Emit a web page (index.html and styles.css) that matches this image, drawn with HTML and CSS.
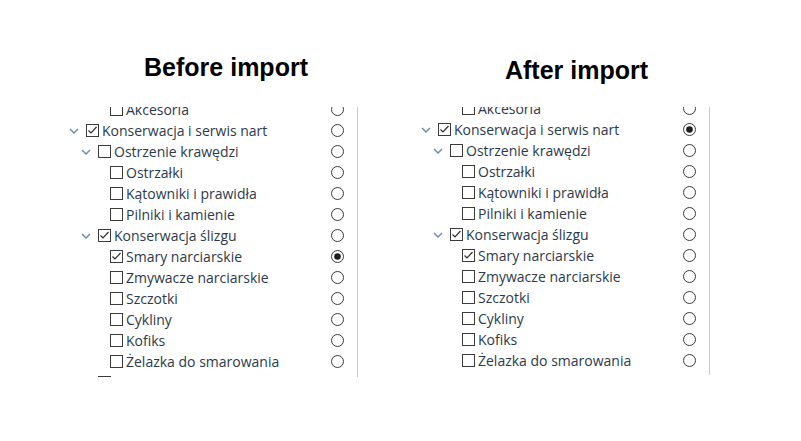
FILE: index.html
```html
<!DOCTYPE html>
<html lang="pl">
<head>
<meta charset="utf-8">
<title>Before / After import</title>
<link rel="stylesheet" href="styles.css">
</head>
<body>
<div class="page">
  <section class="col col-left">
    <h2 class="title">Before import</h2>
    <div class="tree">
      <ul class="list">
        <li class="row l2"><span class="sp"></span><svg class="cb" viewBox="0 0 13 13"><rect x="0.5" y="0.5" width="12" height="12"/></svg><span class="lbl">Akcesoria</span><svg class="rd" viewBox="0 0 13 13"><circle cx="6.5" cy="6.5" r="6"/></svg></li>
        <li class="row l0"><svg class="chev" viewBox="0 0 10 6"><polyline points="1,1 5,5 9,1"/></svg><svg class="cb" viewBox="0 0 13 13"><rect x="0.5" y="0.5" width="12" height="12"/><polyline class="tick" points="2.5,6.5 5,9 10.5,3"/></svg><span class="lbl">Konserwacja i serwis nart</span><svg class="rd" viewBox="0 0 13 13"><circle cx="6.5" cy="6.5" r="6"/></svg></li>
        <li class="row l1"><svg class="chev" viewBox="0 0 10 6"><polyline points="1,1 5,5 9,1"/></svg><svg class="cb" viewBox="0 0 13 13"><rect x="0.5" y="0.5" width="12" height="12"/></svg><span class="lbl">Ostrzenie krawędzi</span><svg class="rd" viewBox="0 0 13 13"><circle cx="6.5" cy="6.5" r="6"/></svg></li>
        <li class="row l2"><span class="sp"></span><svg class="cb" viewBox="0 0 13 13"><rect x="0.5" y="0.5" width="12" height="12"/></svg><span class="lbl">Ostrzałki</span><svg class="rd" viewBox="0 0 13 13"><circle cx="6.5" cy="6.5" r="6"/></svg></li>
        <li class="row l2"><span class="sp"></span><svg class="cb" viewBox="0 0 13 13"><rect x="0.5" y="0.5" width="12" height="12"/></svg><span class="lbl">Kątowniki i prawidła</span><svg class="rd" viewBox="0 0 13 13"><circle cx="6.5" cy="6.5" r="6"/></svg></li>
        <li class="row l2"><span class="sp"></span><svg class="cb" viewBox="0 0 13 13"><rect x="0.5" y="0.5" width="12" height="12"/></svg><span class="lbl">Pilniki i kamienie</span><svg class="rd" viewBox="0 0 13 13"><circle cx="6.5" cy="6.5" r="6"/></svg></li>
        <li class="row l1"><svg class="chev" viewBox="0 0 10 6"><polyline points="1,1 5,5 9,1"/></svg><svg class="cb" viewBox="0 0 13 13"><rect x="0.5" y="0.5" width="12" height="12"/><polyline class="tick" points="2.5,6.5 5,9 10.5,3"/></svg><span class="lbl">Konserwacja ślizgu</span><svg class="rd" viewBox="0 0 13 13"><circle cx="6.5" cy="6.5" r="6"/></svg></li>
        <li class="row l2"><span class="sp"></span><svg class="cb" viewBox="0 0 13 13"><rect x="0.5" y="0.5" width="12" height="12"/><polyline class="tick" points="2.5,6.5 5,9 10.5,3"/></svg><span class="lbl">Smary narciarskie</span><svg class="rd" viewBox="0 0 13 13"><circle cx="6.5" cy="6.5" r="6"/><circle class="dot" cx="6.5" cy="6.5" r="3.3"/></svg></li>
        <li class="row l2"><span class="sp"></span><svg class="cb" viewBox="0 0 13 13"><rect x="0.5" y="0.5" width="12" height="12"/></svg><span class="lbl">Zmywacze narciarskie</span><svg class="rd" viewBox="0 0 13 13"><circle cx="6.5" cy="6.5" r="6"/></svg></li>
        <li class="row l2"><span class="sp"></span><svg class="cb" viewBox="0 0 13 13"><rect x="0.5" y="0.5" width="12" height="12"/></svg><span class="lbl">Szczotki</span><svg class="rd" viewBox="0 0 13 13"><circle cx="6.5" cy="6.5" r="6"/></svg></li>
        <li class="row l2"><span class="sp"></span><svg class="cb" viewBox="0 0 13 13"><rect x="0.5" y="0.5" width="12" height="12"/></svg><span class="lbl">Cykliny</span><svg class="rd" viewBox="0 0 13 13"><circle cx="6.5" cy="6.5" r="6"/></svg></li>
        <li class="row l2"><span class="sp"></span><svg class="cb" viewBox="0 0 13 13"><rect x="0.5" y="0.5" width="12" height="12"/></svg><span class="lbl">Kofiks</span><svg class="rd" viewBox="0 0 13 13"><circle cx="6.5" cy="6.5" r="6"/></svg></li>
        <li class="row l2"><span class="sp"></span><svg class="cb" viewBox="0 0 13 13"><rect x="0.5" y="0.5" width="12" height="12"/></svg><span class="lbl">Żelazka do smarowania</span><svg class="rd" viewBox="0 0 13 13"><circle cx="6.5" cy="6.5" r="6"/></svg></li>
        <li class="row l1"><span class="sp"></span><svg class="cb" viewBox="0 0 13 13"><rect x="0.5" y="0.5" width="12" height="12"/></svg></li>
      </ul>
    </div>
  </section>
  <section class="col col-right">
    <h2 class="title">After import</h2>
    <div class="tree">
      <ul class="list">
        <li class="row l2"><span class="sp"></span><svg class="cb" viewBox="0 0 13 13"><rect x="0.5" y="0.5" width="12" height="12"/></svg><span class="lbl">Akcesoria</span><svg class="rd" viewBox="0 0 13 13"><circle cx="6.5" cy="6.5" r="6"/></svg></li>
        <li class="row l0"><svg class="chev" viewBox="0 0 10 6"><polyline points="1,1 5,5 9,1"/></svg><svg class="cb" viewBox="0 0 13 13"><rect x="0.5" y="0.5" width="12" height="12"/><polyline class="tick" points="2.5,6.5 5,9 10.5,3"/></svg><span class="lbl">Konserwacja i serwis nart</span><svg class="rd" viewBox="0 0 13 13"><circle cx="6.5" cy="6.5" r="6"/><circle class="dot" cx="6.5" cy="6.5" r="3.3"/></svg></li>
        <li class="row l1"><svg class="chev" viewBox="0 0 10 6"><polyline points="1,1 5,5 9,1"/></svg><svg class="cb" viewBox="0 0 13 13"><rect x="0.5" y="0.5" width="12" height="12"/></svg><span class="lbl">Ostrzenie krawędzi</span><svg class="rd" viewBox="0 0 13 13"><circle cx="6.5" cy="6.5" r="6"/></svg></li>
        <li class="row l2"><span class="sp"></span><svg class="cb" viewBox="0 0 13 13"><rect x="0.5" y="0.5" width="12" height="12"/></svg><span class="lbl">Ostrzałki</span><svg class="rd" viewBox="0 0 13 13"><circle cx="6.5" cy="6.5" r="6"/></svg></li>
        <li class="row l2"><span class="sp"></span><svg class="cb" viewBox="0 0 13 13"><rect x="0.5" y="0.5" width="12" height="12"/></svg><span class="lbl">Kątowniki i prawidła</span><svg class="rd" viewBox="0 0 13 13"><circle cx="6.5" cy="6.5" r="6"/></svg></li>
        <li class="row l2"><span class="sp"></span><svg class="cb" viewBox="0 0 13 13"><rect x="0.5" y="0.5" width="12" height="12"/></svg><span class="lbl">Pilniki i kamienie</span><svg class="rd" viewBox="0 0 13 13"><circle cx="6.5" cy="6.5" r="6"/></svg></li>
        <li class="row l1"><svg class="chev" viewBox="0 0 10 6"><polyline points="1,1 5,5 9,1"/></svg><svg class="cb" viewBox="0 0 13 13"><rect x="0.5" y="0.5" width="12" height="12"/><polyline class="tick" points="2.5,6.5 5,9 10.5,3"/></svg><span class="lbl">Konserwacja ślizgu</span><svg class="rd" viewBox="0 0 13 13"><circle cx="6.5" cy="6.5" r="6"/></svg></li>
        <li class="row l2"><span class="sp"></span><svg class="cb" viewBox="0 0 13 13"><rect x="0.5" y="0.5" width="12" height="12"/><polyline class="tick" points="2.5,6.5 5,9 10.5,3"/></svg><span class="lbl">Smary narciarskie</span><svg class="rd" viewBox="0 0 13 13"><circle cx="6.5" cy="6.5" r="6"/></svg></li>
        <li class="row l2"><span class="sp"></span><svg class="cb" viewBox="0 0 13 13"><rect x="0.5" y="0.5" width="12" height="12"/></svg><span class="lbl">Zmywacze narciarskie</span><svg class="rd" viewBox="0 0 13 13"><circle cx="6.5" cy="6.5" r="6"/></svg></li>
        <li class="row l2"><span class="sp"></span><svg class="cb" viewBox="0 0 13 13"><rect x="0.5" y="0.5" width="12" height="12"/></svg><span class="lbl">Szczotki</span><svg class="rd" viewBox="0 0 13 13"><circle cx="6.5" cy="6.5" r="6"/></svg></li>
        <li class="row l2"><span class="sp"></span><svg class="cb" viewBox="0 0 13 13"><rect x="0.5" y="0.5" width="12" height="12"/></svg><span class="lbl">Cykliny</span><svg class="rd" viewBox="0 0 13 13"><circle cx="6.5" cy="6.5" r="6"/></svg></li>
        <li class="row l2"><span class="sp"></span><svg class="cb" viewBox="0 0 13 13"><rect x="0.5" y="0.5" width="12" height="12"/></svg><span class="lbl">Kofiks</span><svg class="rd" viewBox="0 0 13 13"><circle cx="6.5" cy="6.5" r="6"/></svg></li>
        <li class="row l2"><span class="sp"></span><svg class="cb" viewBox="0 0 13 13"><rect x="0.5" y="0.5" width="12" height="12"/></svg><span class="lbl">Żelazka do smarowania</span><svg class="rd" viewBox="0 0 13 13"><circle cx="6.5" cy="6.5" r="6"/></svg></li>
        <li class="row l1"><span class="sp"></span><svg class="cb" viewBox="0 0 13 13"><rect x="0.5" y="0.5" width="12" height="12"/></svg></li>
      </ul>
    </div>
  </section>
</div>
</body>
</html>
```

FILE: styles.css
```css
html, body {
  margin: 0;
  padding: 0;
  background: #ffffff;
}

.page {
  display: flex;
  gap: 58px;
  padding-left: 64px;
}

.col {
  width: 294px;
  display: flex;
  flex-direction: column;
}

.title {
  margin: 0;
  font-family: "Liberation Sans", Arial, sans-serif;
  font-weight: bold;
  font-size: 25px;
  line-height: 29px;
  color: #000000;
  text-align: center;
}

.col-left .title {
  margin-top: 53px;
  margin-bottom: 25px;
  padding-left: 30px;
}

.col-right .title {
  margin-top: 56px;
  margin-bottom: 22px;
  padding-left: 27px;
}

.tree {
  height: 270px;
  overflow: hidden;
  border-right: 1px solid #c9c9c9;
}

.col-right .tree {
  height: 268px;
}

.list {
  list-style: none;
  margin: -8px 0 0 0;
  padding: 0;
}

.col-right .list {
  margin-top: -9px;
}

.row {
  display: flex;
  align-items: center;
  height: 21px;
  font-family: "Open Sans", "Noto Sans", sans-serif;
  font-size: 14px;
  color: #2b3a4b;
  white-space: nowrap;
}

.l0 { padding-left: 5px; }
.l1 { padding-left: 17px; }
.l2 { padding-left: 29px; }

.chev {
  width: 10px;
  height: 6px;
  margin-right: 7px;
  flex: none;
}

.chev polyline {
  fill: none;
  stroke: #6f8fae;
  stroke-width: 1.5;
}

.sp {
  width: 17px;
  flex: none;
}

.cb {
  width: 13px;
  height: 13px;
  flex: none;
  margin-right: 3px;
}

.cb rect {
  fill: #ffffff;
  stroke: #3a3a3a;
  stroke-width: 1;
}

.cb .tick {
  fill: none;
  stroke: #2e2e2e;
  stroke-width: 1.2;
}

.lbl {
  flex: 1;
}

.rd {
  width: 13px;
  height: 13px;
  flex: none;
  margin-right: 13px;
}

.rd circle {
  fill: #ffffff;
  stroke: #3a3a3a;
  stroke-width: 1;
}

.rd .dot {
  fill: #1e1e1e;
  stroke: none;
}
```
